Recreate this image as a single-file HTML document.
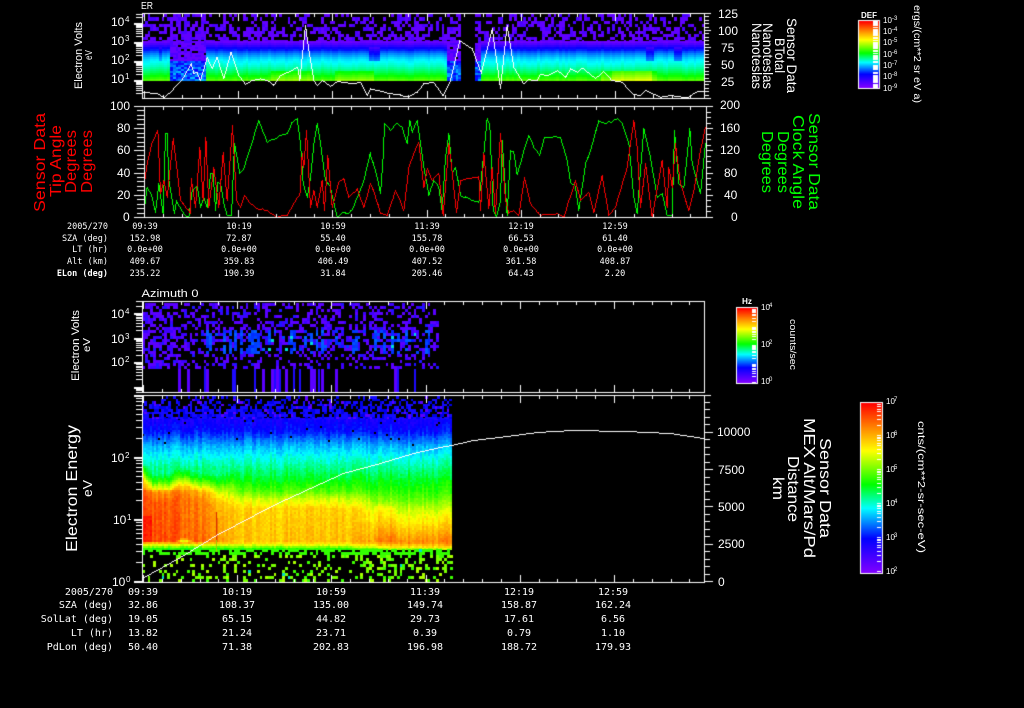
<!DOCTYPE html>
<html><head><meta charset="utf-8"><title>Sensor Data</title>
<style>
html,body{margin:0;padding:0;background:#000;width:1024px;height:708px;overflow:hidden}
#c{position:absolute;left:0;top:0;width:1024px;height:708px}
svg{position:absolute;left:0;top:0}
text{fill:#fff;font-family:"Liberation Sans",sans-serif}
.t1 text{font-family:"DejaVu Sans Mono","Liberation Mono",monospace;font-size:8.5px;text-anchor:middle}
.t1 text.l{text-anchor:end}
.t2 text{font-family:"DejaVu Sans Mono","Liberation Mono",monospace;font-size:10px;text-anchor:middle}
.t2 text.l{text-anchor:end}
.ax text{font-size:12px}
.ax text.s{font-size:8px}
.cb text{font-size:8px}
.cb text.s{font-size:6px}
</style></head><body>
<canvas id="c" width="1024" height="708"></canvas>
<svg width="1024" height="708" viewBox="0 0 1024 708">
<text x="141" y="9" font-size="10" textLength="12" lengthAdjust="spacingAndGlyphs">ER</text>
<text x="141.500" y="297" font-size="11" textLength="57" lengthAdjust="spacingAndGlyphs">Azimuth 0</text>

<g class="ax">
<text x="111" y="26">10</text><text class="s" x="125" y="22">4</text>
<text x="111" y="45">10</text><text class="s" x="125" y="41">3</text>
<text x="111" y="64">10</text><text class="s" x="125" y="60">2</text>
<text x="111" y="83">10</text><text class="s" x="125" y="79">1</text>
<text x="111" y="318">10</text><text class="s" x="125" y="314">4</text>
<text x="111" y="343">10</text><text class="s" x="125" y="339">3</text>
<text x="111" y="366">10</text><text class="s" x="125" y="362">2</text>
<text x="111" y="462" font-size="13">10</text><text class="s" x="125" y="458">2</text>
<text x="113" y="524">10</text><text class="s" x="127" y="520">1</text>
<text x="112" y="586">10</text><text class="s" x="126" y="582">0</text>

<text x="718" y="18">125</text><text x="718" y="35">100</text><text x="721" y="52">75</text><text x="721" y="69">50</text><text x="721" y="86">25</text>
<text x="110" y="110">100</text><text x="117" y="132">80</text><text x="117" y="154">60</text><text x="117" y="177">40</text><text x="117" y="199">20</text><text x="123" y="221">0</text>
<text x="720" y="109">200</text><text x="720" y="132">160</text><text x="720" y="154">120</text><text x="724" y="177">80</text><text x="724" y="199">40</text><text x="731" y="221">0</text>
<text x="717" y="436">10000</text><text x="718" y="474">7500</text><text x="718" y="511">5000</text><text x="718" y="548">2500</text><text x="718" y="586">0</text>
</g>

<g class="cb">
<text x="861" y="18" font-size="9" font-weight="bold" textLength="16" lengthAdjust="spacingAndGlyphs">DEF</text>
<text x="883" y="23">10</text><text class="s" x="892" y="20">-3</text>
<text x="883" y="34">10</text><text class="s" x="892" y="31">-4</text>
<text x="883" y="45">10</text><text class="s" x="892" y="42">-5</text>
<text x="883" y="57">10</text><text class="s" x="892" y="54">-6</text>
<text x="883" y="68">10</text><text class="s" x="892" y="65">-7</text>
<text x="883" y="79">10</text><text class="s" x="892" y="76">-8</text>
<text x="883" y="91">10</text><text class="s" x="892" y="88">-9</text>
<text x="742" y="304" font-size="9" font-weight="bold" textLength="10" lengthAdjust="spacingAndGlyphs">Hz</text>
<text x="761" y="310">10</text><text class="s" x="769" y="307">4</text>
<text x="761" y="347">10</text><text class="s" x="769" y="344">2</text>
<text x="761" y="384">10</text><text class="s" x="769" y="381">0</text>
<text x="886" y="404">10</text><text class="s" x="894" y="401">7</text>
<text x="886" y="438">10</text><text class="s" x="894" y="435">6</text>
<text x="886" y="472">10</text><text class="s" x="894" y="469">5</text>
<text x="886" y="506">10</text><text class="s" x="894" y="503">4</text>
<text x="886" y="540">10</text><text class="s" x="894" y="537">3</text>
<text x="886" y="574">10</text><text class="s" x="894" y="571">2</text>
</g>

<!-- rotated labels: left -->
<text transform="translate(82,89) rotate(-90)" font-size="11" textLength="67" lengthAdjust="spacingAndGlyphs">Electron Volts</text>
<text transform="translate(92,60) rotate(-90)" font-size="10" textLength="10" lengthAdjust="spacingAndGlyphs">eV</text>
<text transform="translate(79,381) rotate(-90)" font-size="11" textLength="71" lengthAdjust="spacingAndGlyphs">Electron Volts</text>
<text transform="translate(90,352) rotate(-90)" font-size="10" textLength="14" lengthAdjust="spacingAndGlyphs">eV</text>
<text transform="translate(77,552) rotate(-90)" font-size="16" textLength="127" lengthAdjust="spacingAndGlyphs">Electron Energy</text>
<text transform="translate(92,497) rotate(-90)" font-size="13" textLength="17" lengthAdjust="spacingAndGlyphs">eV</text>
<text style="fill:#f00" transform="translate(45,212) rotate(-90)" font-size="16" textLength="99" lengthAdjust="spacingAndGlyphs">Sensor Data</text>
<text style="fill:#f00" transform="translate(61,197) rotate(-90)" font-size="16" textLength="72" lengthAdjust="spacingAndGlyphs">Tip Angle</text>
<text style="fill:#f00" transform="translate(76,193) rotate(-90)" font-size="16" textLength="63" lengthAdjust="spacingAndGlyphs">Degrees</text>
<text style="fill:#f00" transform="translate(92,193) rotate(-90)" font-size="16" textLength="63" lengthAdjust="spacingAndGlyphs">Degrees</text>

<!-- rotated labels: right -->
<text transform="translate(787,18) rotate(90)" font-size="14" textLength="75" lengthAdjust="spacingAndGlyphs">Sensor Data</text>
<text transform="translate(775,38) rotate(90)" font-size="14" textLength="35" lengthAdjust="spacingAndGlyphs">BTotal</text>
<text transform="translate(763,23) rotate(90)" font-size="14" textLength="66" lengthAdjust="spacingAndGlyphs">Nanoteslas</text>
<text transform="translate(752,23) rotate(90)" font-size="14" textLength="66" lengthAdjust="spacingAndGlyphs">Nanoteslas</text>
<text style="fill:#0f0" transform="translate(809,113) rotate(90)" font-size="16" textLength="97" lengthAdjust="spacingAndGlyphs">Sensor Data</text>
<text style="fill:#0f0" transform="translate(793,115) rotate(90)" font-size="16" textLength="94" lengthAdjust="spacingAndGlyphs">Clock Angle</text>
<text style="fill:#0f0" transform="translate(778,131) rotate(90)" font-size="16" textLength="62" lengthAdjust="spacingAndGlyphs">Degrees</text>
<text style="fill:#0f0" transform="translate(762,131) rotate(90)" font-size="16" textLength="62" lengthAdjust="spacingAndGlyphs">Degrees</text>
<text transform="translate(820,438) rotate(90)" font-size="16" textLength="100" lengthAdjust="spacingAndGlyphs">Sensor Data</text>
<text transform="translate(804,418) rotate(90)" font-size="16" textLength="140" lengthAdjust="spacingAndGlyphs">MEX Alt/Mars/Pd</text>
<text transform="translate(788,456) rotate(90)" font-size="16" textLength="66" lengthAdjust="spacingAndGlyphs">Distance</text>
<text transform="translate(773,477) rotate(90)" font-size="16" textLength="23" lengthAdjust="spacingAndGlyphs">km</text>
<text transform="translate(914,5) rotate(90)" font-size="10" textLength="98" lengthAdjust="spacingAndGlyphs">ergs/(cm**2 sr eV a)</text>
<text transform="translate(790,319) rotate(90)" font-size="9" textLength="51" lengthAdjust="spacingAndGlyphs">counts/sec</text>
<text transform="translate(918,421) rotate(90)" font-size="10" textLength="132" lengthAdjust="spacingAndGlyphs">cnts/(cm**2-sr-sec-eV)</text>

<g class="t1">
<text class="l" x="108" y="229">2005/270</text><text x="145" y="229">09:39</text><text x="239" y="229">10:19</text><text x="333" y="229">10:59</text><text x="427" y="229">11:39</text><text x="521" y="229">12:19</text><text x="615" y="229">12:59</text>
<text class="l" x="108" y="241">SZA (deg)</text><text x="145" y="241">152.98</text><text x="239" y="241">72.87</text><text x="333" y="241">55.40</text><text x="427" y="241">155.78</text><text x="521" y="241">66.53</text><text x="615" y="241">61.40</text>
<text class="l" x="108" y="252">LT (hr)</text><text x="145" y="252">0.0e+00</text><text x="239" y="252">0.0e+00</text><text x="333" y="252">0.0e+00</text><text x="427" y="252">0.0e+00</text><text x="521" y="252">0.0e+00</text><text x="615" y="252">0.0e+00</text>
<text class="l" x="108" y="264">Alt (km)</text><text x="145" y="264">409.67</text><text x="239" y="264">359.83</text><text x="333" y="264">406.49</text><text x="427" y="264">407.52</text><text x="521" y="264">361.58</text><text x="615" y="264">408.87</text>
<text class="l" x="108" y="276" font-weight="bold">ELon (deg)</text><text x="145" y="276">235.22</text><text x="239" y="276">190.39</text><text x="333" y="276">31.84</text><text x="427" y="276">205.46</text><text x="521" y="276">64.43</text><text x="615" y="276">2.20</text>
</g>
<g class="t2">
<text class="l" x="113" y="595">2005/270</text><text x="143" y="595">09:39</text><text x="237" y="595">10:19</text><text x="331" y="595">10:59</text><text x="425" y="595">11:39</text><text x="519" y="595">12:19</text><text x="613" y="595">12:59</text>
<text class="l" x="113" y="608">SZA (deg)</text><text x="143" y="608">32.86</text><text x="237" y="608">108.37</text><text x="331" y="608">135.00</text><text x="425" y="608">149.74</text><text x="519" y="608">158.87</text><text x="613" y="608">162.24</text>
<text class="l" x="113" y="622">SolLat (deg)</text><text x="143" y="622">19.05</text><text x="237" y="622">65.15</text><text x="331" y="622">44.82</text><text x="425" y="622">29.73</text><text x="519" y="622">17.61</text><text x="613" y="622">6.56</text>
<text class="l" x="113" y="636">LT (hr)</text><text x="143" y="636">13.82</text><text x="237" y="636">21.24</text><text x="331" y="636">23.71</text><text x="425" y="636">0.39</text><text x="519" y="636">0.79</text><text x="613" y="636">1.10</text>
<text class="l" x="113" y="650">PdLon (deg)</text><text x="143" y="650">50.40</text><text x="237" y="650">71.38</text><text x="331" y="650">202.83</text><text x="425" y="650">196.98</text><text x="519" y="650">188.72</text><text x="613" y="650">179.93</text>
</g>
</svg>
<script>
var g=document.getElementById('c').getContext('2d');
var W='#fff';
function R(x,y,w,h,c){g.fillStyle=c||W;g.fillRect(Math.round(x),Math.round(y),w,h);}
R(0,0,1024,708,'#000');
var seed=12345;
function rnd(){seed=(seed*1664525+1013904223)%4294967296;return seed/4294967296;}
var S=[[0,128,0,255],[.2,0,0,255],[.38,0,255,255],[.52,0,255,0],[.72,255,255,0],[.85,255,140,0],[1,255,0,0]];
function col(v){v=Math.max(0,Math.min(1,v));for(var i=1;i<S.length;i++){if(v<=S[i][0]){var a=S[i-1],b=S[i],t=(v-a[0])/(b[0]-a[0]);
return 'rgb('+Math.round(a[1]+(b[1]-a[1])*t)+','+Math.round(a[2]+(b[2]-a[2])*t)+','+Math.round(a[3]+(b[3]-a[3])*t)+')';}}return 'rgb(255,0,0)';}
function interp(xs,vs,x){if(x<=xs[0])return vs[0];for(var i=1;i<xs.length;i++){if(x<=xs[i]){return vs[i-1]+(vs[i]-vs[i-1])*(x-xs[i-1])/(xs[i]-xs[i-1]);}}return vs[vs.length-1];}
function cell(x,y,w,h,c){g.fillStyle=c;var a=Math.round(x),b=Math.round(y);g.fillRect(a,b,Math.round(x+w)-a,Math.round(y+h)-b);}
function sstep(a,b,x){var t=Math.max(0,Math.min(1,(x-a)/(b-a)));return t*t*(3-2*t);}

/* ---------- panel 1 spectrogram ---------- */
var ys1=[41,44,47,52,58,65,72,77,80],vs1=[.04,.1,.18,.28,.36,.41,.48,.55,.6];
var notches=[[170,206,1],[445,462,1],[473,480,1],[157,161,.4],[367,380,.6],[645,652,.6],[673,682,.6]];
for(var x=142;x<704;x+=2.8){
 if(x>=461&&x<473)continue;
 var cj=(rnd()-.5)*.025;var n=0;
 for(var k=0;k<notches.length;k++)if(x>=notches[k][0]&&x<notches[k][1])n=notches[k][2];
 var hot=0;
 if((x>270&&x<312)||(x>335&&x<372)||(x>600&&x<655))hot=.05;
 if(x>610&&x<650)hot=.11;
 for(var y=14;y<41;y+=3.3){
  var p=.28+.3*(y-14)/27;if(n>=1)p+=.2;if(x<230&&y<30)p+=.08;
  if(rnd()<p)cell(x,y,2.8,3.3,rnd()<.7?'rgb(96,0,255)':'rgb(72,0,255)');
 }
 for(var y=41;y<80;y+=2){
  var v=interp(ys1,vs1,y)+cj+(y>70?hot:0);
  if(n>=1){ if(y<60){v=.04+(rnd()<.3?.04:0);if(rnd()<.08)v=-1;} else v=.16+rnd()*.15+(y-60)*.002; }
  else if(n>0){ if(y>46&&y<60)v-=.14*n; }
  if(v<0)continue;
  cell(x,y,2.8,2,col(v));
 }
}
/* ---------- panel 3 spectrogram ---------- */
for(var x=142;x<437;x+=2.8){
 var bv=rnd(),streak=(x>205&&rnd()<.3);
 for(var y=303;y<369;y+=3){
  var p=.36;if(x<175)p=.58;if(y>325&&y<350)p+=.1;if(y>355)p-=.1;
  if(streak&&y>328&&y<352)p=.8;
  if(rnd()<p){
   var r=rnd(),c=r<.55?'rgb(90,0,255)':r<.9?'rgb(60,0,255)':'rgb(30,20,255)';
   if(y>328&&y<352&&x>200&&(streak||rnd()<.12))c=rnd()<.06?'rgb(0,220,220)':'rgb(0,'+Math.round(30+rnd()*70)+',255)';
   cell(x,y,2.8,3,c);
  }
 }
 if(bv<.18){cell(x,369,bv<.08?3:2,23,bv<.09?'rgb(90,0,255)':'rgb(30,10,255)');}
}
/* ---------- panel 4 spectrogram ---------- */
var ys4=[418,430,445,460,478,490,498,508,541,544,548];
var vm=[.17,.21,.33,.41,.5,.58,.68,.77,.79,.7,.54];
var yh=[470,478,484,490,500,541,544,548];
var vh=[.45,.55,.68,.8,.85,.87,.7,.54];
var yr=[478,495,510,525,541,547,549];
var vr=[.5,.58,.69,.77,.86,.74,.6];
for(var x=142;x<451;x+=2){
 var cj=(rnd()-.5)*.055;
 var wL=1-sstep(195,250,x),wR=sstep(335,400,x);
 var shift=Math.round(3*Math.sin(x/9)+1.5*Math.sin(x/4)+(x<152?(152-x)*1.2:0));
 for(var y=418;y<549;y+=2){
  var v=interp(ys4,vm,y);
  if(wL>0&&y>465){
   var h=y<541?interp(yh,vh,y+shift):interp(yh,vh,y);
   if(y>488&&y<541)h+=(216-x)*.001;
   if(x<152&&y>515&&y<541)h=.97;
   v=v*(1-wL)+h*wL;
  }
  if(wR>0&&y>478){
   v=v*(1-wR)+interp(yr,vr,y)*wR;
   if(x>372&&x<395&&y>505&&y<541)v+=.025;
  }
  v+=cj+(rnd()-.5)*.04;
  if(y<445&&rnd()<.012){cell(x,y,2,2,'#000');continue;}
  cell(x,y,2,2,col(v));
 }
}
/* upper speckle */
for(var x=142;x<451;x+=2.4){
 for(var y=396;y<418;y+=2.6){
  var p=.25+.6*(y-396)/22;
  if(rnd()<p)cell(x,y,2.4,2.6,rnd()<.1?'rgb(90,0,255)':rnd()<.6?'rgb(20,10,255)':'rgb(0,0,235)');
 }
}
/* lower speckle */
for(var x=142;x<451;x+=2.8){
 for(var y=549;y<581;y+=3){
  var p=.2;if(x>360&&y<570)p=.42;if(y<553)p=x>360?.75:.5;if(y>575)p=.3;
  if(rnd()<p){
   var r=rnd(),c=y<554?'rgb(50,255,0)':(r<.3?'rgb(60,255,0)':r<.75?'rgb(120,255,0)':'rgb(170,255,0)');
   if(rnd()<.025)c='rgb(0,220,200)';
   cell(x,y,2.8,3,c);
  }
 }
}
for(var y=512;y<552;y++)R(216,y,1,1,y<540?'rgb(220,50,0)':'rgb(160,200,0)');
R(217,518,1,24,'rgb(240,110,0)');

/* ---------- line plotting (aliased) ---------- */
function poly(pts,c){g.fillStyle=c;for(var i=1;i<pts.length;i++){var a=pts[i-1],b=pts[i],d=Math.max(Math.abs(a[0]-b[0]),Math.abs(a[1]-b[1]),1);
 for(var s=0;s<=d;s++){g.fillRect(Math.round(a[0]+(b[0]-a[0])*s/d),Math.round(a[1]+(b[1]-a[1])*s/d),1,1);}}}
function Z(arr,ox,oy){var r=[];for(var i=0;i<arr.length;i+=2)r.push([ox+arr[i]/3,oy+arr[i+1]/3]);return r;}
/* subdivide long segments into ~2.8px steps with small vertical jitter */
function jag(pts,amt){var r=[pts[0]];for(var i=1;i<pts.length;i++){var a=pts[i-1],b=pts[i],dx=b[0]-a[0],n=Math.max(1,Math.round(dx/2.8));
 for(var s=1;s<=n;s++){var y=a[1]+(b[1]-a[1])*s/n;if(s<n)y+=(rnd()-.5)*amt;r.push([a[0]+dx*s/n,Math.min(217,Math.max(107,y))]);}}return r;}

var wl=Z([246,275,290,280,312,292,340,265,370,232,392,190,400,220,410,215,420,240,440,172,455,205,470,170,490,235,512,155,535,225,555,252,575,240,600,235,620,240,640,255,660,225,690,212,712,200,718,240,735,75,745,150,760,240,770,255,785,240,810,258,830,243,880,250,900,245,920,285,930,265,960,272,990,280,1020,282],60,0)
 .concat(Z([0,285,25,290,50,275,70,250,100,245,128,285,150,240,178,120,215,145,242,218,275,85,300,265,320,75,340,200,370,250,385,238,410,240,420,222,440,225,470,210,495,230,510,205,530,215,545,203,585,235,610,212,635,240,665,245,700,282,720,285,735,270,780,290,810,285,860,292,885,275,913,272],400,0));
poly(wl,W);

var gr=Z([372,325,380,260,395,290,405,335,415,250,428,340,435,100,440,100,445,240,462,340,468,300,490,340,505,350,515,270,530,255,540,320,550,290,560,320,570,220,578,220,585,330,592,245,600,250,610,310,620,345,633,345,642,130,658,220,670,205,690,140,715,60,740,125,780,105,800,100,815,65,830,55,840,130,848,250,860,290,870,230,880,130,890,70,900,130,915,240,930,260,950,352,965,335,985,340,1000,318,1030,240,1050,155],20,100)
 .concat(Z([0,165,15,210,30,280,38,170,42,70,60,90,80,68,95,80,110,130,118,60,125,95,140,60,150,130,160,200,175,285,190,240,205,260,215,330,225,170,235,100,245,220,255,200,270,285,325,305,340,160,350,55,358,75,368,330,378,352,390,300,395,120,410,345,420,150,430,155,440,222,460,150,475,105,490,140,507,165,522,110,570,110,590,180,600,245,615,260,625,330,645,190,660,150,685,60,705,70,740,55,755,70,775,130,790,290,800,340,820,85,840,170,860,290,875,280,890,345,905,345,912,90,925,250,940,260,958,85,965,190,990,280,1005,130],370,100));
poly(jag(gr,1.6),'#00ff00');
var rd=Z([372,245,380,190,395,125,412,90,420,280,430,240,440,290,458,115,470,210,480,300,510,340,512,235,525,320,538,140,548,300,556,110,565,320,580,200,595,320,608,155,620,300,636,75,648,300,660,320,672,285,690,310,710,325,740,330,770,350,800,345,820,310,838,285,845,160,850,200,858,90,870,320,880,270,890,320,905,240,912,330,922,165,935,320,955,245,970,235,985,290,1010,265,1030,320,1050,250],20,100)
 .concat(Z([0,250,15,290,30,340,50,345,75,270,100,330,115,200,130,160,145,125,160,260,170,205,185,240,205,220,218,345,235,130,258,335,270,240,325,228,330,330,340,160,355,325,365,200,375,340,390,100,405,300,415,340,430,330,445,345,462,232,480,310,510,345,560,340,580,350,615,240,630,300,655,275,670,335,695,225,715,345,735,320,770,200,790,60,800,140,810,320,825,190,845,350,875,180,890,320,895,200,905,260,915,130,930,250,955,330,970,270,990,150,1005,80],370,100));
poly(jag(rd,1.6),'#ff0000');

poly([[142,578],[180,557],[216,535],[273,505],[310,488],[343,473],[380,463],[413,453],[440,447],[451,445],[473,440],[507,436],[537,432],[572,430],[625,431],[670,433],[703,438]],W);

/* ---------- axes ---------- */
function box(x0,y0,x1,y1){R(x0,y0,x1-x0+1,1);R(x0,y1,x1-x0+1,1);R(x0,y0,1,y1-y0+1);R(x1,y0,1,y1-y0+1);}
function tticks(x0,x1,y0,y1,o){for(var i=0;;i++){var x=o+18.84*i;if(x>=x1)break;if(x<x0)continue;var m=i%5==0?8:4;R(x,y0,1,m);R(x,y1-m+1,1,m);}}
function logt(ax,y0,dec,top,bot){for(var d=-3;d<8;d++)for(var m=1;m<10;m++){var y=y0-dec*(d+Math.log10(m));if(y<top||y>bot)continue;var L=m==1?8:6;R(ax-L,y,L,m==1?2:1);}}
function rlin(ax,top,step,bot,maj,L1,L2){var i=0;for(var y=bot;y>=top-.01;y-=step){var L=i%maj==0?L2:L1;R(ax,y,L,1);i++;}}
/* p1 */
box(142,13,704,98);tticks(142,704,13,98,144);logt(142,80,19,13,98);rlin(704,13,3.4,98,5,5,7);
/* p2 */
box(144,106,706,217);tticks(144,706,106,217,144);R(134,106,10,1);
for(var i=0;i<=25;i++){var y=217-i*4.44;R(i%5==0?134:137,y,i%5==0?10:7,1);}
rlin(706,106,5.55,217,4,5,7);
/* p3 */
box(142,301,704,392);tticks(142,704,301,392,143);logt(142,362,24.5,301,392);
/* p4 */
box(142,395,704,582);tticks(142,704,395,582,143);logt(142,581,62,395,582);
rlin(704,395,7.46,581,5,6,9);R(704,395,7,1);

/* ---------- colour bars ---------- */
function drawBar(x0,y0,x1,y1){for(var y=y0;y<=y1;y++)R(x0,y,x1-x0+1,1,col(1-(y-y0)/(y1-y0)));box(x0-1,y0-1,x1+1,y1+1);}
drawBar(859,21,878,87);
R(873,21,5,67);
[26,28,36,39,41,49,52,54,60,63,64,70,71,74,83].forEach(function(y){R(873,y,5,1,col(1-(y-21)/66));});
drawBar(737,308,756,382);
for(var d=0;d<4;d++)for(var m=1;m<10;m++){var y=382-18.5*(d+Math.log10(m));if(y>308)R(752,y,4,1);}
drawBar(861,403,881,572);
for(var d=0;d<5;d++)for(var m=1;m<10;m++){var y=571-34*(d+Math.log10(m));if(y>403)R(877,y,4,1);}
</script>
</body></html>
